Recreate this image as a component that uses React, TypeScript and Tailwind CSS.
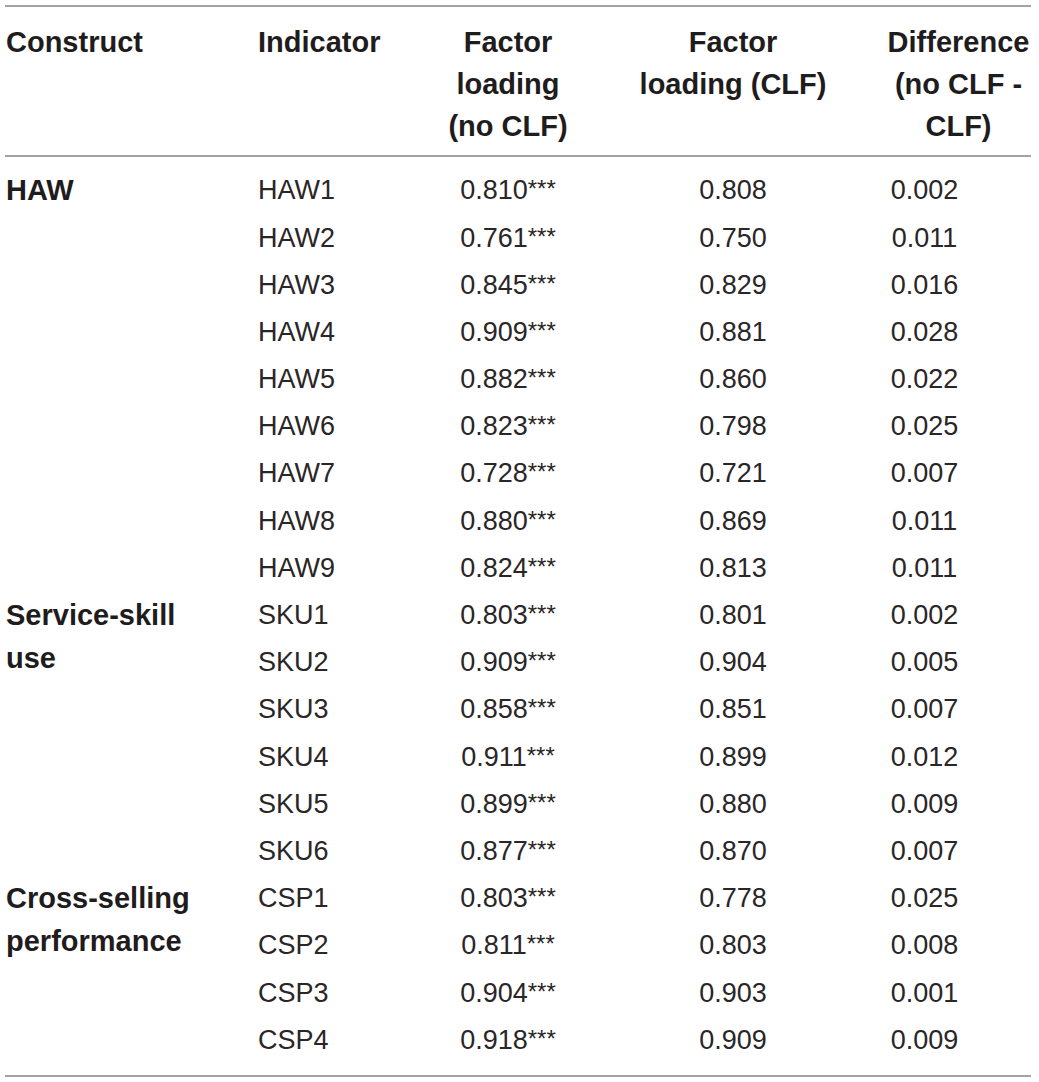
import React from 'react'

type Row = { indicator: string; noClf: string; clf: string; diff: string }
type Group = { construct: string[]; rows: Row[] }

const groups: Group[] = [
  {
    construct: ['HAW'],
    rows: [
      { indicator: 'HAW1', noClf: '0.810', clf: '0.808', diff: '0.002' },
      { indicator: 'HAW2', noClf: '0.761', clf: '0.750', diff: '0.011' },
      { indicator: 'HAW3', noClf: '0.845', clf: '0.829', diff: '0.016' },
      { indicator: 'HAW4', noClf: '0.909', clf: '0.881', diff: '0.028' },
      { indicator: 'HAW5', noClf: '0.882', clf: '0.860', diff: '0.022' },
      { indicator: 'HAW6', noClf: '0.823', clf: '0.798', diff: '0.025' },
      { indicator: 'HAW7', noClf: '0.728', clf: '0.721', diff: '0.007' },
      { indicator: 'HAW8', noClf: '0.880', clf: '0.869', diff: '0.011' },
      { indicator: 'HAW9', noClf: '0.824', clf: '0.813', diff: '0.011' },
    ],
  },
  {
    construct: ['Service-skill', 'use'],
    rows: [
      { indicator: 'SKU1', noClf: '0.803', clf: '0.801', diff: '0.002' },
      { indicator: 'SKU2', noClf: '0.909', clf: '0.904', diff: '0.005' },
      { indicator: 'SKU3', noClf: '0.858', clf: '0.851', diff: '0.007' },
      { indicator: 'SKU4', noClf: '0.911', clf: '0.899', diff: '0.012' },
      { indicator: 'SKU5', noClf: '0.899', clf: '0.880', diff: '0.009' },
      { indicator: 'SKU6', noClf: '0.877', clf: '0.870', diff: '0.007' },
    ],
  },
  {
    construct: ['Cross-selling', 'performance'],
    rows: [
      { indicator: 'CSP1', noClf: '0.803', clf: '0.778', diff: '0.025' },
      { indicator: 'CSP2', noClf: '0.811', clf: '0.803', diff: '0.008' },
      { indicator: 'CSP3', noClf: '0.904', clf: '0.903', diff: '0.001' },
      { indicator: 'CSP4', noClf: '0.918', clf: '0.909', diff: '0.009' },
    ],
  },
]

const cols = 'grid grid-cols-[252px_153px_196px_254px_171px]'

export default function App() {
  return (
    <div className="min-h-screen bg-white pt-[5px] pl-[5px] font-['Liberation_Sans',Arial,sans-serif] text-[#1f1c1d]">
      <div className="w-[1026px] border-t-2 border-b-2 border-[#a3a3a3]">
        {/* header */}
        <div className={`${cols} border-b-2 border-[#a3a3a3] pt-[14px] pb-[8px] text-[29px] font-bold leading-[42px]`}>
          <div className="pl-[1px]">Construct</div>
          <div className="pl-[1px]">Indicator</div>
          <div className="text-center">
            Factor
            <br />
            loading
            <br />
            (no CLF)
          </div>
          <div className="text-center">
            Factor
            <br />
            loading (CLF)
          </div>
          <div className="pl-[26px] text-center">
            Difference
            <br />
            (no CLF -
            <br />
            CLF)
          </div>
        </div>

        {/* body */}
        <div className={`${cols} auto-rows-[47.2px] pt-[10px] pb-[11px] text-[27px] text-[#2a2627]`}>
          {groups.map((g) =>
            g.rows.map((r, i) => (
              <React.Fragment key={r.indicator}>
                {i === 0 && (
                  <div
                    className="pt-[2px] pl-[1px] text-[29px] font-bold leading-[43px] text-[#1f1c1d]"
                    style={{ gridRow: `span ${g.rows.length}` }}
                  >
                    {g.construct.map((c) => (
                      <div key={c}>{c}</div>
                    ))}
                  </div>
                )}
                <div className="col-start-2 flex items-center pl-[1px]">{r.indicator}</div>
                <div className="flex items-center justify-center">
                  <span>
                    {r.noClf}
                    <span className="relative top-[-2px] text-[24px]">***</span>
                  </span>
                </div>
                <div className="flex items-center justify-center">{r.clf}</div>
                <div className="flex items-center justify-center pr-[42px]">{r.diff}</div>
              </React.Fragment>
            )),
          )}
        </div>
      </div>
    </div>
  )
}
